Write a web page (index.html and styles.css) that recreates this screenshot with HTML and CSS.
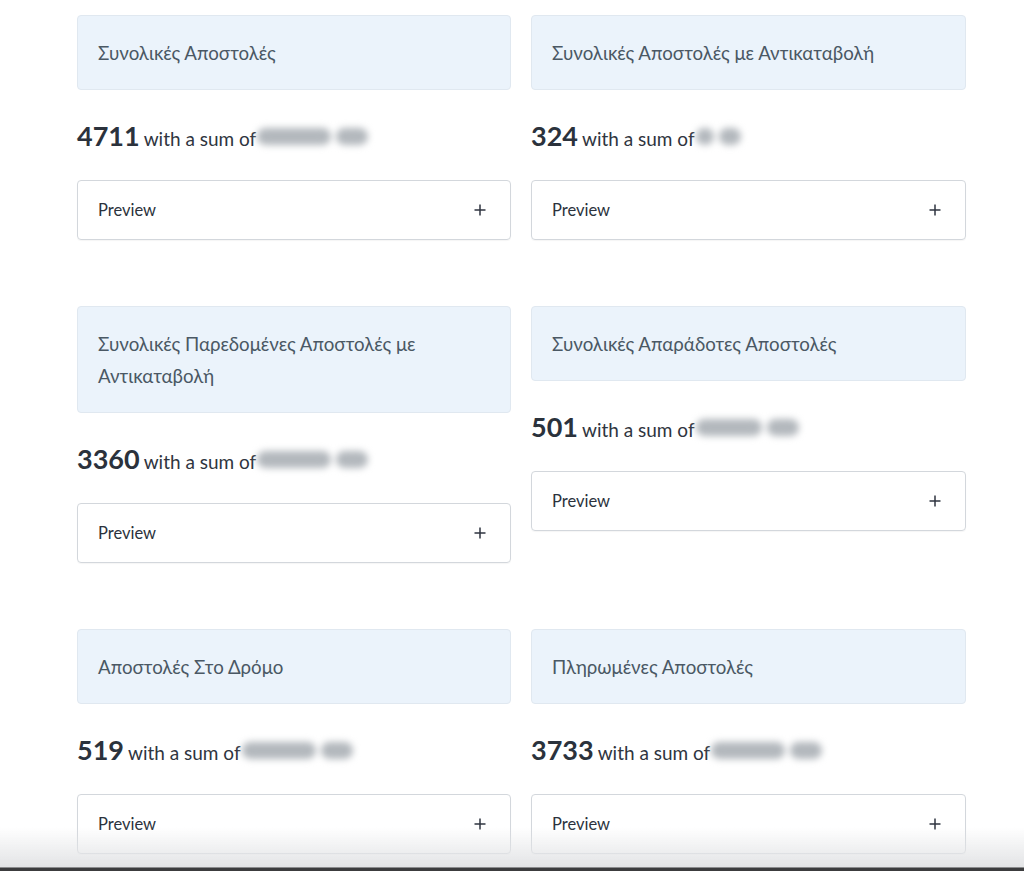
FILE: index.html
```html
<!DOCTYPE html>
<html lang="el">
<head>
<meta charset="utf-8">
<link rel="stylesheet" href="styles.css">
</head>
<body>
<main class="grid">
  <section class="stat">
    <div class="stat-title">Συνολικές Αποστολές</div>
    <div class="stat-value"><b>4711</b> with a sum of<span class="blur"><i class="pill w44"></i><i class="pill w28"></i></span></div>
    <div class="preview"><span>Preview</span><svg class="plus" viewBox="0 0 12 12" width="12" height="12"><path d="M6 0.5V11.5M0.5 6H11.5"/></svg></div>
  </section>
  <section class="stat">
    <div class="stat-title">Συνολικές Αποστολές με Αντικαταβολή</div>
    <div class="stat-value"><b>324</b> with a sum of<span class="blur"><i class="pill w14"></i><i class="pill w16"></i></span></div>
    <div class="preview"><span>Preview</span><svg class="plus" viewBox="0 0 12 12" width="12" height="12"><path d="M6 0.5V11.5M0.5 6H11.5"/></svg></div>
  </section>
  <section class="stat">
    <div class="stat-title">Συνολικές Παρεδομένες Αποστολές με Αντικαταβολή</div>
    <div class="stat-value"><b>3360</b> with a sum of<span class="blur"><i class="pill w44"></i><i class="pill w28"></i></span></div>
    <div class="preview"><span>Preview</span><svg class="plus" viewBox="0 0 12 12" width="12" height="12"><path d="M6 0.5V11.5M0.5 6H11.5"/></svg></div>
  </section>
  <section class="stat">
    <div class="stat-title">Συνολικές Απαράδοτες Αποστολές</div>
    <div class="stat-value"><b>501</b> with a sum of<span class="blur"><i class="pill w50"></i><i class="pill w28"></i></span></div>
    <div class="preview"><span>Preview</span><svg class="plus" viewBox="0 0 12 12" width="12" height="12"><path d="M6 0.5V11.5M0.5 6H11.5"/></svg></div>
  </section>
  <section class="stat">
    <div class="stat-title">Αποστολές Στο Δρόμο</div>
    <div class="stat-value"><b>519</b> with a sum of<span class="blur"><i class="pill w44"></i><i class="pill w28"></i></span></div>
    <div class="preview"><span>Preview</span><svg class="plus" viewBox="0 0 12 12" width="12" height="12"><path d="M6 0.5V11.5M0.5 6H11.5"/></svg></div>
  </section>
  <section class="stat">
    <div class="stat-title">Πληρωμένες Αποστολές</div>
    <div class="stat-value"><b>3733</b> with a sum of<span class="blur"><i class="pill w44"></i><i class="pill w28"></i></span></div>
    <div class="preview"><span>Preview</span><svg class="plus" viewBox="0 0 12 12" width="12" height="12"><path d="M6 0.5V11.5M0.5 6H11.5"/></svg></div>
  </section>
</main>
<div class="bottom-fade"></div>
</body>
</html>
```

FILE: styles.css
```css
html, body {
  margin: 0;
  padding: 0;
  background: #ffffff;
  overflow: hidden;
}

body {
  font-family: "Lato", "Noto Sans", sans-serif;
  color: #2f3540;
  height: 871px;
}

.grid {
  display: grid;
  grid-template-columns: 434px 435px;
  column-gap: 20px;
  row-gap: 66px;
  align-items: start;
  padding: 15px 0 0 77px;
}

.stat {
  display: flex;
  flex-direction: column;
}

.stat-title {
  background: #ebf3fb;
  border: 1px solid #e0e8f0;
  border-radius: 4px;
  padding: 21px 20px 20px 20px;
  font-size: 18.7px;
  line-height: 32px;
  color: #4a5864;
}

.stat-value {
  display: flex;
  align-items: baseline;
  height: 42px;
  margin-top: 25px;
  margin-bottom: 23px;
  font-size: 19px;
  line-height: 42px;
  color: #2f3540;
}

.stat-value b {
  font-size: 27px;
  font-weight: 700;
  margin-right: 4px;
  color: #2b323c;
}

.blur {
  display: inline-flex;
  gap: 5px;
  align-self: center;
  margin-left: -1px;
  padding: 2px;
  filter: blur(3.5px);
}

.pill {
  display: block;
  height: 17px;
  border-radius: 9px;
  background: #b3b8bd;
}

.w14 { width: 18px; }
.w16 { width: 22px; }
.w28 { width: 32px; }
.w44 { width: 74px; }
.w50 { width: 66px; }

.preview {
  display: flex;
  justify-content: space-between;
  align-items: center;
  height: 58px;
  border: 1px solid #d3d7dc;
  border-radius: 4px;
  padding: 0 24px 0 20px;
  font-size: 16.5px;
  color: #2b323c;
  box-shadow: 0 1px 1px rgba(0, 0, 0, 0.04);
}

.plus {
  display: block;
  fill: none;
  stroke: #2f3540;
  stroke-width: 1.5;
}

.bottom-fade {
  position: fixed;
  left: 0;
  right: 0;
  bottom: 0;
  height: 44px;
  background: linear-gradient(to bottom, rgba(255,255,255,0) 0%, rgba(228,229,231,0.85) 75%, #e3e4e6 91%, #3c3c3e 93%, #3c3c3e 100%);
  pointer-events: none;
}
```
